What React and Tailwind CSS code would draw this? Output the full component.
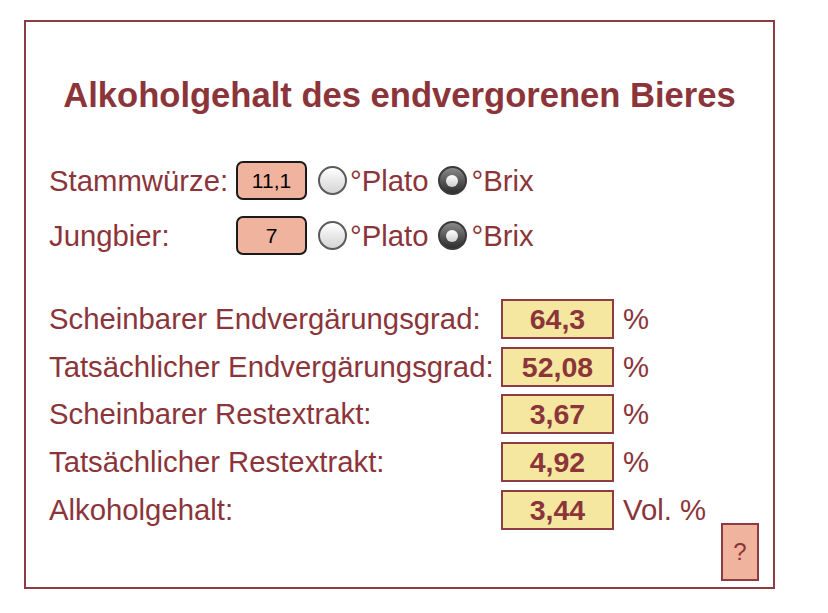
import React from 'react';

const Radio = ({ checked }) => (
    <span
        className={`inline-flex items-center justify-center w-[29px] h-[29px] rounded-full border-2 ${
            checked
                ? 'border-[#3a3a3a] bg-gradient-to-b from-[#8a8a8a] to-[#2e2e2e]'
                : 'border-[#5a5a5a] bg-gradient-to-b from-white to-[#d4d4d4]'
        }`}
    >
        {checked && (
            <span className="w-[12px] h-[12px] rounded-full bg-gradient-to-b from-white to-[#cfcfcf]"></span>
        )}
    </span>
);

const InputRow = ({ label, value }) => (
    <div className="flex items-center h-[39px]">
        <div className="w-[187px]">{label}</div>
        <div className="w-[71px] h-[39px] rounded-[7px] border-2 border-[#1a1a1a] bg-[#efb39e] flex items-center justify-center text-[21px] text-black">
            {value}
        </div>
        <div className="ml-[11px] flex items-center">
            <Radio checked={false} />
            <span className="ml-[3px]">°Plato</span>
        </div>
        <div className="ml-[9px] flex items-center">
            <Radio checked={true} />
            <span className="ml-[5px]">°Brix</span>
        </div>
    </div>
);

const ResultRow = ({ label, value, unit }) => (
    <div className="flex items-center h-[40px]">
        <div className="w-[452px] whitespace-nowrap">{label}</div>
        <div className="w-[113px] h-[40px] border-2 border-[#8c3c42] bg-[#f5e79f] flex items-center justify-center font-bold text-[28.5px]">
            {value}
        </div>
        <div className="ml-[9px] whitespace-nowrap">{unit}</div>
    </div>
);

const results = [
    { label: 'Scheinbarer Endvergärungsgrad:', value: '64,3', unit: '%' },
    { label: 'Tatsächlicher Endvergärungsgrad:', value: '52,08', unit: '%' },
    { label: 'Scheinbarer Restextrakt:', value: '3,67', unit: '%' },
    { label: 'Tatsächlicher Restextrakt:', value: '4,92', unit: '%' },
    { label: 'Alkoholgehalt:', value: '3,44', unit: 'Vol. %' },
];

export default function App() {
    return (
        <div className="min-h-screen bg-white pl-[24px] pt-[20px] text-[#8b353b] font-['Liberation_Sans',Arial,sans-serif]">
            <div className="w-[751px] h-[569px] border-2 border-[#8c3c42] flex flex-col">
                {/* Title */}
                <h1 className="mt-[53px] text-center font-bold text-[34.6px] leading-[40px]">
                    Alkoholgehalt des endvergorenen Bieres
                </h1>

                {/* Inputs */}
                <div className="mt-[46px] pl-[23px] flex flex-col gap-[16px] text-[29.3px] leading-[39px]">
                    <InputRow label="Stammwürze:" value="11,1" />
                    <InputRow label="Jungbier:" value="7" />
                </div>

                {/* Results */}
                <div className="mt-[44px] pl-[23px] flex flex-col gap-[7.7px] text-[29.3px] leading-[40px]">
                    {results.map((r) => (
                        <ResultRow key={r.label} {...r} />
                    ))}
                </div>

                {/* Help button */}
                <div className="flex justify-end pr-[14px] -mt-[7px]">
                    <button className="w-[38px] h-[58px] border-2 border-[#8c3c42] bg-[#efb39e] text-[24px] text-[#8b353b] flex items-center justify-center">
                        ?
                    </button>
                </div>
            </div>
        </div>
    );
}
